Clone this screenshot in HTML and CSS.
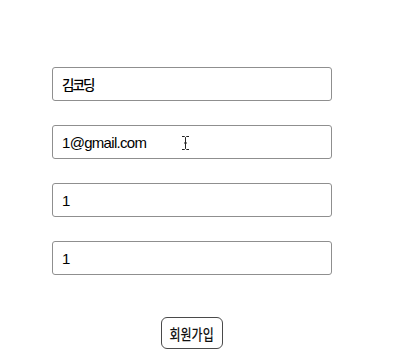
FILE: index.html
```html
<!DOCTYPE html>
<html lang="ko">
<head>
<meta charset="utf-8">
<title>회원가입</title>
<link rel="stylesheet" href="styles.css">
</head>
<body>
<div class="page">
  <form class="signup">
    <input class="field field-ko" type="text" value="김코딩">
    <div class="field-wrap">
      <input class="field" type="text" value="1@gmail.com">
      <svg class="cursor" width="9" height="16" viewBox="0 0 9 16" aria-hidden="true">
        <path d="M1 1.5 H3.5 L4.5 2.5 L5.5 1.5 H8 M4.5 2.5 V13.5 M1 14.5 H3.5 L4.5 13.5 L5.5 14.5 H8 M3 8 H6" fill="none" stroke="#222" stroke-width="1"/>
      </svg>
    </div>
    <input class="field" type="text" value="1">
    <input class="field" type="text" value="1">
    <button class="submit" type="button"><span class="submit-label">회원가입</span></button>
  </form>
</div>
</body>
</html>
```

FILE: styles.css
```css
html, body {
  margin: 0;
  padding: 0;
  background: #ffffff;
}

.page {
  width: 384px;
}

.signup {
  display: flex;
  flex-direction: column;
  align-items: center;
  gap: 24px;
  padding-top: 67px;
}

.field-wrap {
  position: relative;
}

.field {
  display: block;
  box-sizing: border-box;
  width: 280px;
  height: 34px;
  margin: 0;
  padding: 0 9px;
  border: 1px solid #8f8f8f;
  border-radius: 3px;
  background: #ffffff;
  color: #000000;
  font-family: "Liberation Sans", "Noto Sans CJK KR", sans-serif;
  font-size: 15px;
  letter-spacing: -0.7px;
  outline: none;
}

.field-ko {
  font-family: "Noto Sans CJK KR", "Liberation Sans", sans-serif;
  font-weight: 500;
  font-size: 13.5px;
  letter-spacing: -1.9px;
}

.cursor {
  position: absolute;
  left: 129px;
  top: 10px;
}

.submit {
  box-sizing: border-box;
  display: flex;
  align-items: center;
  justify-content: center;
  width: 62px;
  height: 32px;
  margin-top: 18px;
  padding: 0;
  border: 1px solid #4a4a4a;
  border-radius: 6px;
  background: #ffffff;
  color: #111111;
  font-family: "Noto Sans CJK KR", sans-serif;
  font-weight: 500;
  font-size: 15px;
}

.submit-label {
  display: inline-block;
  transform: scaleX(0.8);
  white-space: nowrap;
}
```
